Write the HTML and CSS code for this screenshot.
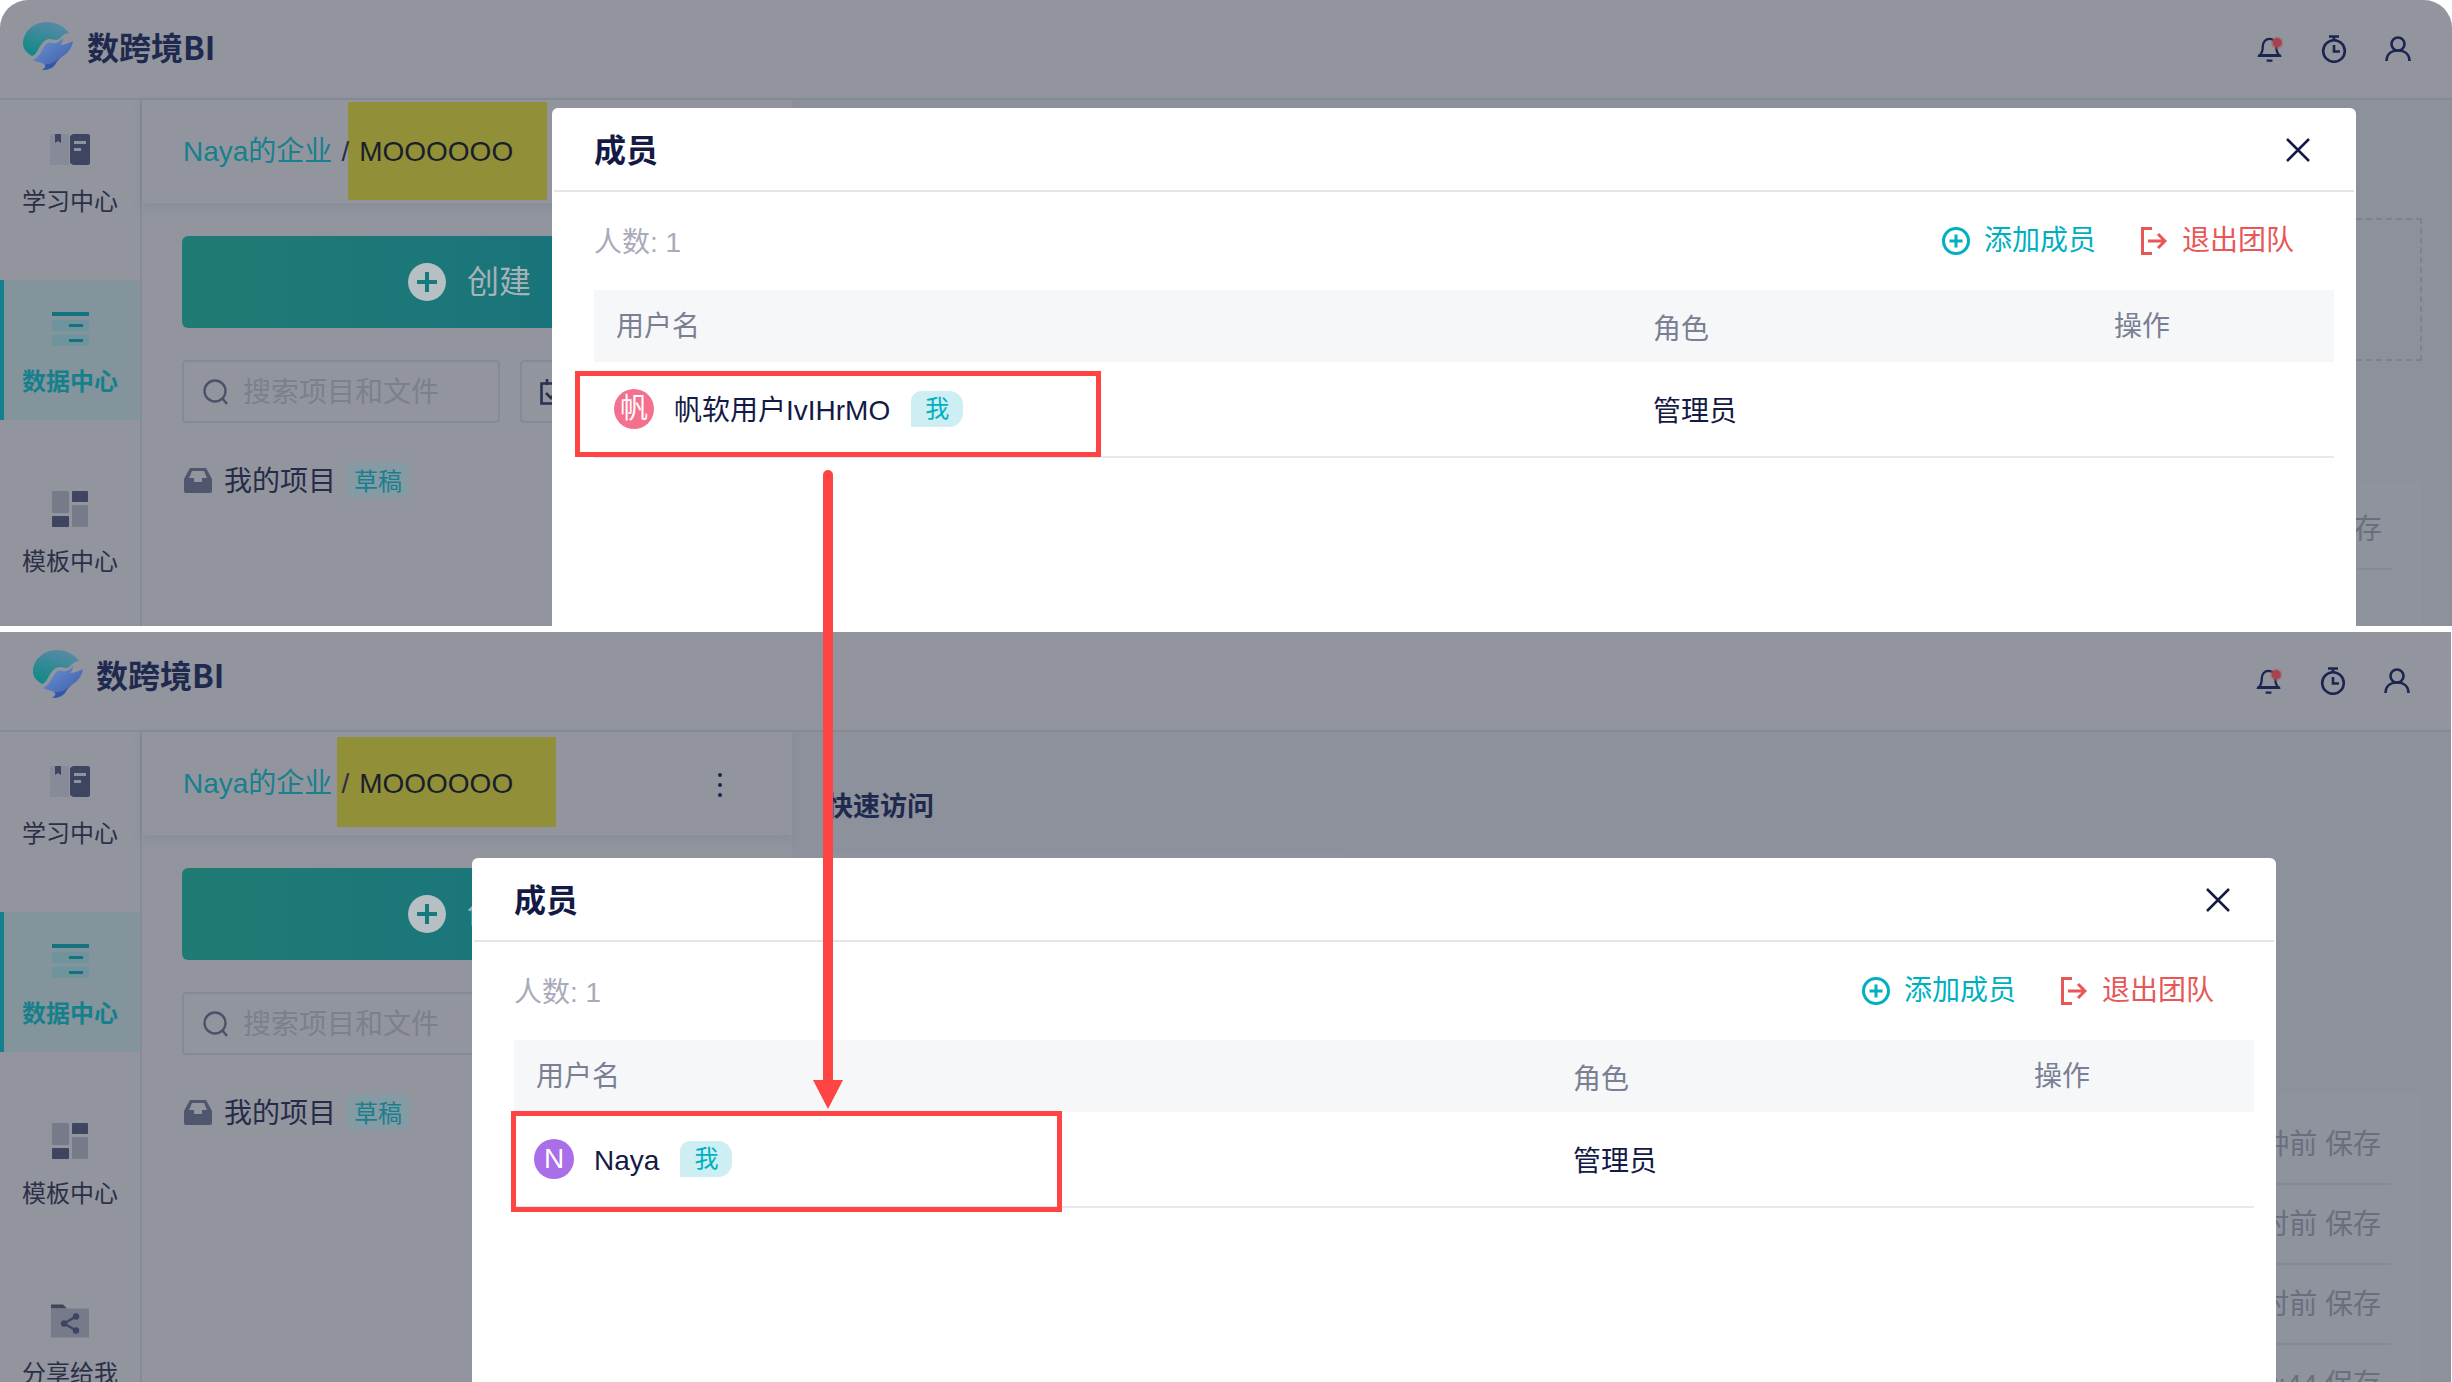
FILE: index.html
```html
<!DOCTYPE html>
<html lang="zh-CN">
<head>
<meta charset="utf-8">
<title>成员</title>
<link rel="stylesheet" href="styles.css">
</head>
<body>
<svg class="sprite" aria-hidden="true">
  <defs>
    <linearGradient id="g-teal" x1="0.3" y1="1" x2="0.7" y2="0"><stop offset="0" stop-color="#0f8a86"/><stop offset="1" stop-color="#5a8aa6"/></linearGradient>
    <linearGradient id="g-blue" x1="0" y1="0" x2="1" y2="1"><stop offset="0" stop-color="#6b93d0"/><stop offset="1" stop-color="#3a59a8"/></linearGradient>
    <symbol id="i-logo" viewBox="0 0 50 48">
      <path fill="url(#g-teal)" d="M0 22C0 9 11 0 24 0c9 0 17 4 22 11-4 0-7 3-10 6-3 2-6 0-9 0-5 0-8 4-11 9-2 4-4 7-7 8-5-3-9-7-9-12z"/>
      <path fill="url(#g-blue)" d="M10 38c5-2 8-8 11-13 3-5 6-5 9-4 3 1 7-1 10-5 0 3-1 5-3 7 4 0 9-2 13-4-1 7-5 12-10 15-3 2-5 4-7 7-2 4-6 7-14 7 3-2 5-4 2-6-4-2-8-2-11-4z"/>
      <path fill="#3556a6" d="M40 34c-3 2-5 4-7 7-2 4-6 7-14 7 3-2 5-4 2-6 5 1 9-1 12-3 3-2 5-4 7-5z"/>
    </symbol>
    <symbol id="i-book" viewBox="0 0 40 32">
      <path fill="#878b99" d="M0 1h19v31H1a1 1 0 0 1-1-1z"/>
      <path fill="#3e4561" d="M5 1h6v9l-3-2-3 2z"/>
      <path fill="#3e4561" d="M20 3l3-2h15a2 2 0 0 1 2 2v27a2 2 0 0 1-2 2H23l-3-2z"/>
      <path fill="#8f93a0" d="M24 8h12v3H24zM24 15h7v3h-7z"/>
    </symbol>
    <symbol id="i-list" viewBox="0 0 37 34">
      <path fill="#14737f" d="M0 0h37v4H0z"/>
      <path fill="#6f949e" d="M0 8h37v11H0zM0 23h37v11H0z"/>
      <path fill="#14737f" d="M17 12h14v3H17zM17 27h14v3H17z"/>
    </symbol>
    <symbol id="i-tpl" viewBox="0 0 36 36">
      <rect fill="#767a89" x="0" y="0" width="17" height="22" rx="1"/>
      <rect fill="#3e4561" x="20" y="0" width="16" height="11" rx="1"/>
      <rect fill="#3e4561" x="0" y="25" width="17" height="11" rx="1"/>
      <rect fill="#767a89" x="20" y="14" width="16" height="22" rx="1"/>
    </symbol>
    <symbol id="i-share" viewBox="0 0 38 33">
      <path fill="#3e4561" d="M0 0h12l4 4H0z"/>
      <path fill="#767a89" d="M0 4h38v29H0z"/>
      <circle fill="#3e4561" cx="25" cy="12" r="3.2"/><circle fill="#3e4561" cx="13" cy="19" r="3.2"/><circle fill="#3e4561" cx="25" cy="26" r="3.2"/>
      <path stroke="#3e4561" stroke-width="2.2" d="M25 12l-12 7 12 7" fill="none"/>
    </symbol>
    <symbol id="i-inbox" viewBox="0 0 28 25">
      <path fill="#4f566e" d="M6 0h16l6 11v12a2 2 0 0 1-2 2H2a2 2 0 0 1-2-2V11z"/>
      <path fill="#92959e" d="M8 3h12l3 7h-5v4h-8v-4H5z"/>
    </symbol>
    <symbol id="i-search" viewBox="0 0 26 26">
      <circle cx="12" cy="12" r="10.5" fill="none" stroke="#4c5269" stroke-width="2.4"/>
      <path d="M19 19l5 6" stroke="#4c5269" stroke-width="2.4" fill="none"/>
    </symbol>
    <symbol id="i-cal" viewBox="0 0 26 26">
      <path d="M1.5 4.5h23v20h-23z" fill="none" stroke="#2a3050" stroke-width="2.6"/>
      <path d="M7 0v6M19 0v6" stroke="#2a3050" stroke-width="2.6"/>
      <path d="M6 14l5 5 8-9" fill="none" stroke="#2a3050" stroke-width="2.6"/>
    </symbol>
    <symbol id="i-bell" viewBox="0 0 27 27">
      <path d="M3 20c2-2 3-4 3-9 0-5 3-8 7-8s7 3 7 8c0 5 1 7 3 9z" fill="none" stroke="#1c2550" stroke-width="2.4"/>
      <path d="M1 20.500h24M10 25.500h6" stroke="#1c2550" stroke-width="2.4"/>
      <circle cx="21" cy="7" r="6.500" fill="#a5646f" opacity=".45"/>
      <circle cx="21" cy="7" r="4.800" fill="#a8424f"/>
    </symbol>
    <symbol id="i-timer" viewBox="0 0 26 28">
      <circle cx="13" cy="16" r="10.800" fill="none" stroke="#1c2550" stroke-width="2.6"/>
      <path d="M8 1.500h10M13 2v3M13 10v6.500h6" fill="none" stroke="#1c2550" stroke-width="2.6"/>
    </symbol>
    <symbol id="i-user" viewBox="0 0 26 26">
      <circle cx="13" cy="8" r="6.500" fill="none" stroke="#1c2550" stroke-width="2.6"/>
      <path d="M1.500 25c0-7 5-10.500 11.500-10.500S24.500 18 24.500 25" fill="none" stroke="#1c2550" stroke-width="2.6"/>
    </symbol>
    <symbol id="i-add" viewBox="0 0 28 28">
      <circle cx="14" cy="14" r="12.500" fill="none" stroke="#00b0c1" stroke-width="3"/>
      <path d="M14 7.500v13M7.500 14h13" stroke="#00b0c1" stroke-width="3"/>
    </symbol>
    <symbol id="i-exit" viewBox="0 0 26 28">
      <path d="M11 1.500H1.500v25H11" fill="none" stroke="#e95656" stroke-width="3"/>
      <path d="M7 14h17M17 7l7 7-7 7" fill="none" stroke="#e95656" stroke-width="3"/>
    </symbol>
    <symbol id="i-close" viewBox="0 0 24 24">
      <path d="M1 1l22 22M23 1L1 23" stroke="#141a44" stroke-width="2.500" fill="none"/>
    </symbol>
  </defs>
</svg>

<main class="page">
  <!-- 上半部分 -->
  <section class="app app-a">
    <header class="topbar">
      <div class="brand">
        <svg class="logo"><use href="#i-logo"/></svg>
        <span class="brand-name">数跨境BI</span>
      </div>
      <div class="tools">
        <svg class="tool"><use href="#i-bell"/></svg>
        <svg class="tool"><use href="#i-timer"/></svg>
        <svg class="tool"><use href="#i-user"/></svg>
      </div>
    </header>
    <div class="body">
      <nav class="side">
        <a class="nav"><svg class="nav-ic ic-book"><use href="#i-book"/></svg><span>学习中心</span></a>
        <a class="nav active"><svg class="nav-ic ic-list"><use href="#i-list"/></svg><span>数据中心</span></a>
        <a class="nav"><svg class="nav-ic ic-tpl"><use href="#i-tpl"/></svg><span>模板中心</span></a>
        <a class="nav"><svg class="nav-ic ic-share"><use href="#i-share"/></svg><span>分享给我</span></a>
      </nav>
      <div class="col">
        <div class="crumb">
          <i class="mark"></i>
          <span class="crumb-link">Naya的企业</span><span class="crumb-sep">/</span><span class="crumb-cur">MOOOOOO</span>
          <span class="dots"><i></i><i></i><i></i></span>
        </div>
        <div class="col-in">
          <button class="create"><span class="plus"></span>创建</button>
          <div class="filter">
            <div class="search"><svg class="ic-26"><use href="#i-search"/></svg><span>搜索项目和文件</span></div>
            <div class="check"><svg class="ic-26"><use href="#i-cal"/></svg></div>
          </div>
          <div class="proj">
            <svg class="ic-inbox"><use href="#i-inbox"/></svg><span>我的项目</span><em class="draft">草稿</em>
          </div>
        </div>
      </div>
      <div class="main">
        <div class="dashed"></div>
        <div class="recent recent-a">
          <div class="row-save">5分钟前 保存</div>
        </div>
      </div>
    </div>
    <div class="modal">
      <div class="m-head"><strong>成员</strong><svg class="m-close"><use href="#i-close"/></svg></div>
      <div class="m-bar">
        <span class="count">人数: 1</span>
        <span class="act add"><svg class="ic-add"><use href="#i-add"/></svg>添加成员</span>
        <span class="act exit"><svg class="ic-exit"><use href="#i-exit"/></svg>退出团队</span>
      </div>
      <div class="grid g-head"><span class="c1">用户名</span><span class="c2">角色</span><span class="c3">操作</span></div>
      <div class="grid g-row">
        <span class="user"><b class="ava ava-pink">帆</b><span class="uname">帆软用户IvIHrMO</span><em class="me">我</em></span>
        <span class="role">管理员</span><span></span>
      </div>
    </div>
  </section>

  <!-- 下半部分 -->
  <section class="app app-b">
    <header class="topbar">
      <div class="brand">
        <svg class="logo"><use href="#i-logo"/></svg>
        <span class="brand-name">数跨境BI</span>
      </div>
      <div class="tools">
        <svg class="tool"><use href="#i-bell"/></svg>
        <svg class="tool"><use href="#i-timer"/></svg>
        <svg class="tool"><use href="#i-user"/></svg>
      </div>
    </header>
    <div class="body">
      <nav class="side">
        <a class="nav"><svg class="nav-ic ic-book"><use href="#i-book"/></svg><span>学习中心</span></a>
        <a class="nav active"><svg class="nav-ic ic-list"><use href="#i-list"/></svg><span>数据中心</span></a>
        <a class="nav"><svg class="nav-ic ic-tpl"><use href="#i-tpl"/></svg><span>模板中心</span></a>
        <a class="nav"><svg class="nav-ic ic-share"><use href="#i-share"/></svg><span>分享给我</span></a>
      </nav>
      <div class="col">
        <div class="crumb">
          <i class="mark"></i>
          <span class="crumb-link">Naya的企业</span><span class="crumb-sep">/</span><span class="crumb-cur">MOOOOOO</span>
          <span class="dots"><i></i><i></i><i></i></span>
        </div>
        <div class="col-in">
          <button class="create"><span class="plus"></span>创建</button>
          <div class="filter">
            <div class="search"><svg class="ic-26"><use href="#i-search"/></svg><span>搜索项目和文件</span></div>
            <div class="check"><svg class="ic-26"><use href="#i-cal"/></svg></div>
          </div>
          <div class="proj">
            <svg class="ic-inbox"><use href="#i-inbox"/></svg><span>我的项目</span><em class="draft">草稿</em>
          </div>
        </div>
      </div>
      <div class="main">
        <h2 class="quick">快速访问</h2>
        <div class="quick-card"></div>
        <div class="recent recent-b">
          <div class="row-save">5分钟前 保存</div>
          <div class="row-save">1小时前 保存</div>
          <div class="row-save">2小时前 保存</div>
          <div class="row-save">10:44 保存</div>
        </div>
      </div>
    </div>
    <div class="modal">
      <div class="m-head"><strong>成员</strong><svg class="m-close"><use href="#i-close"/></svg></div>
      <div class="m-bar">
        <span class="count">人数: 1</span>
        <span class="act add"><svg class="ic-add"><use href="#i-add"/></svg>添加成员</span>
        <span class="act exit"><svg class="ic-exit"><use href="#i-exit"/></svg>退出团队</span>
      </div>
      <div class="grid g-head"><span class="c1">用户名</span><span class="c2">角色</span><span class="c3">操作</span></div>
      <div class="grid g-row">
        <span class="user"><b class="ava ava-purple">N</b><span class="uname">Naya</span><em class="me">我</em></span>
        <span class="role">管理员</span><span></span>
      </div>
    </div>
  </section>

  <!-- 标注 -->
  <div class="box box-a"></div>
  <div class="box box-b"></div>
  <svg class="arrow" viewBox="0 0 30 640">
    <path d="M15 5V612" stroke="#ff4444" stroke-width="10" stroke-linecap="round" fill="none"/>
    <path d="M0 610h30l-15 29z" fill="#ff4444"/>
  </svg>
</main>
</body>
</html>
```

FILE: styles.css
```css
* { box-sizing: border-box; }
html, body { margin: 0; padding: 0; background: #fff; }
body {
  width: 2452px;
  height: 1382px;
  overflow: hidden;
  font-family: "Liberation Sans", "Noto Sans CJK SC", sans-serif;
  font-size: 28px;
  line-height: 36px;
  color: #141a44;
}
.sprite { display: block; width: 0; height: 0; }
.page { position: relative; width: 2452px; height: 1382px; }
em { font-style: normal; }

/* app frame */
.app { position: relative; overflow: hidden; background: #92959e; }
.app-a { height: 626px; margin-bottom: 6px; border-radius: 28px 28px 0 0; }
.app-b { height: 750px; width: 2451px; }

.topbar {
  display: flex;
  align-items: center;
  justify-content: space-between;
  height: 100px;
  border-bottom: 2px solid #868a95;
  padding-right: 41px;
}
.brand { display: flex; align-items: center; gap: 14px; }
.app-a .brand { padding: 0 0 6px 23px; }
.app-b .brand { padding: 0 0 14px 33px; gap: 13px; }
.logo { width: 50px; height: 48px; display: block; }
.brand-name {
  font-family: "Noto Sans CJK SC", sans-serif;
  font-weight: 700;
  font-size: 32px;
  line-height: 40px;
  color: #1f2a4e;
}
.tools { display: flex; gap: 38px; }
.tool { width: 26px; height: 28px; display: block; }

.body { display: flex; height: 650px; }

/* sidebar */
.side {
  flex: none;
  width: 142px;
  border-right: 2px solid #868a95;
  display: flex;
  flex-direction: column;
  gap: 40px;
}
.nav {
  display: flex;
  flex-direction: column;
  align-items: center;
  flex: none;
  height: 140px;
  padding-top: 31px;
  font-size: 24px;
  line-height: 32px;
  color: #2b3048;
}
.nav-ic { display: block; height: 36px; }
.nav span { margin-top: 19px; white-space: nowrap; }
.ic-book { width: 40px; }
.ic-list { width: 37px; }
.ic-tpl { width: 36px; }
.ic-share { width: 38px; }
.nav.active {
  background: #84949c;
  box-shadow: inset 4px 0 0 #14808c;
  color: #14808c;
  font-weight: 700;
}

/* left column */
.col { flex: none; width: 650px; display: flex; flex-direction: column; }
.crumb {
  position: relative;
  display: flex;
  align-items: center;
  height: 104px;
  padding-left: 41px;
  border-bottom: 1px solid #8b8f99;
  box-shadow: 0 4px 8px rgba(110, 115, 130, .25);
  white-space: nowrap;
}
.crumb > span { position: relative; }
.crumb-link { color: #17808f; }
.crumb-sep { margin: 0 10px 0 9px; color: #2b3048; }
.crumb-cur { color: #1a1e2a; }
.mark { position: absolute; background: #918f38; }
.app-a .mark { left: 206px; top: 2px; width: 199px; height: 98px; }
.app-b .mark { left: 195px; top: 5px; width: 219px; height: 90px; }
.dots {
  position: absolute !important;
  left: 576px;
  top: 41px;
  display: flex;
  flex-direction: column;
  gap: 6px;
}
.dots i { display: block; width: 4px; height: 4px; border-radius: 50%; background: #1c2550; }

.col-in { padding: 32px 41px 0 40px; }
.create {
  display: flex;
  align-items: center;
  justify-content: center;
  gap: 21px;
  width: 569px;
  height: 92px;
  border: 0;
  border-radius: 6px;
  padding: 0 0 0 6px;
  background: linear-gradient(90deg, #1f7c74, #15707e);
  color: #a5b3b8;
  font: inherit;
  font-size: 32px;
}
.plus {
  position: relative;
  display: block;
  width: 38px;
  height: 38px;
  border-radius: 50%;
  background: #b6c0c4;
}
.plus::before, .plus::after {
  content: "";
  position: absolute;
  background: #167a7c;
}
.plus::before { left: 17px; top: 9px; width: 4px; height: 20px; }
.plus::after { left: 9px; top: 17px; width: 20px; height: 4px; }

.filter { display: flex; gap: 20px; margin-top: 32px; }
.search, .check {
  display: flex;
  align-items: center;
  height: 63px;
  border: 2px solid #858a95;
  border-radius: 4px;
}
.search { width: 318px; padding-left: 19px; gap: 14px; color: #7b808c; white-space: nowrap; }
.search span { padding-top: 3px; }
.check { width: 64px; padding-left: 18px; }
.ic-26 { width: 26px; height: 26px; display: block; flex: none; }

.proj {
  display: flex;
  align-items: center;
  height: 36px;
  margin-top: 39px;
  padding-left: 2px;
  color: #262c48;
}
.proj span { padding-top: 3px; }
.ic-inbox { width: 28px; height: 25px; display: block; margin-right: 12px; }
.draft {
  margin-left: 10px;
  width: 64px;
  height: 36px;
  line-height: 39px;
  text-align: center;
  border-radius: 8px;
  background: #859aa2;
  color: #17808f;
  font-size: 24px;
}

/* right area */
.main { flex: 1; min-width: 0; background: #8c919b; padding: 0 30px 0 34px; }
.dashed { height: 143px; margin-top: 118px; border: 2px dashed #7d828d; }
.recent { background: #8f939d; padding: 0 30px; color: #6a6f7b; }
.recent-a { margin-top: 121px; padding-top: 8px; height: 200px; }
.recent-b { margin-top: 142px; padding-top: 11px; height: 400px; }
.row-save {
  height: 80px;
  line-height: 80px;
  padding-right: 10px;
  text-align: right;
  border-bottom: 2px solid #868a95;
}
.quick {
  margin: 0;
  padding-top: 55px;
  height: 120px;
  font-size: 27px;
  line-height: 36px;
  font-family: "Noto Sans CJK SC", sans-serif;
  font-weight: 700;
  color: #1f2a4e;
}
.quick-card { height: 100px; width: 519px; background: #8f939d; }

/* modal */
.modal {
  position: absolute;
  top: 108px;
  width: 1804px;
  height: 800px;
  background: #fff;
  border-radius: 6px 6px 0 0;
}
.app-a .modal { left: 552px; }
.app-b .modal { left: 472px; top: 226px; }
.m-head {
  display: flex;
  align-items: center;
  justify-content: space-between;
  height: 84px;
  margin: 0 2px;
  padding: 0 44px 2px 40px;
  border-bottom: 2px solid #e4e4ea;
}
.m-head strong { font-size: 32px; font-family: "Noto Sans CJK SC", sans-serif; line-height: 40px; }
.m-close { width: 24px; height: 24px; display: block; margin-top: 3px; }
.m-bar {
  display: flex;
  align-items: center;
  height: 98px;
  padding: 0 62px 0 42px;
}
.count { margin-right: auto; color: #a9abb8; padding-top: 3px; }
.act { display: flex; align-items: center; gap: 14px; }
.add { color: #00b0c1; margin-right: 45px; }
.exit { color: #e95656; gap: 15px; }
.ic-add { width: 28px; height: 28px; display: block; }
.ic-exit { width: 26px; height: 28px; display: block; }

.grid {
  display: grid;
  grid-template-columns: 1059px 461px 1fr;
  align-items: center;
  margin: 0 22px 0 42px;
}
.g-head { height: 72px; background: #f6f7f9; color: #7b7f93; }
.c1 { padding: 2px 0 0 22px; }
.c2 { padding-top: 7px; }
.c3 { padding-top: 2px; }
.g-row { height: 96px; border-bottom: 2px solid #e8e8ee; }
.user { display: flex; align-items: center; padding-left: 20px; }
.uname { padding-top: 4px; }
.ava {
  flex: none;
  display: flex;
  align-items: center;
  justify-content: center;
  width: 40px;
  height: 40px;
  border-radius: 50%;
  color: #fff;
  font-weight: 400;
  margin-right: 20px;
}
.ava-pink { background: #f5708f; }
.ava-purple { background: #a96ee8; }
.me {
  width: 52px;
  height: 36px;
  margin-left: 21px;
  line-height: 36px;
  text-align: center;
  border-radius: 10px 14px 14px 0;
  background: #cdeef2;
  color: #00b0c1;
  font-size: 24px;
}
.role { padding-top: 6px; }

/* annotations */
.box { position: absolute; border: 5px solid #ff4444; }
.box-a { left: 575px; top: 371px; width: 526px; height: 86px; }
.box-b { left: 511px; top: 1111px; width: 551px; height: 101px; }
.arrow { position: absolute; left: 813px; top: 470px; width: 30px; height: 640px; }
```
